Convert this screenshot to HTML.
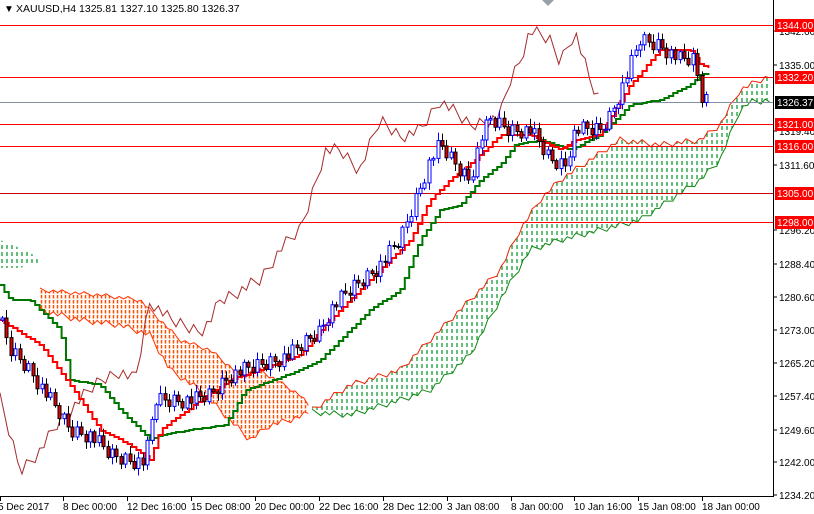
<!DOCTYPE html>
<html><head><meta charset="utf-8"><style>
html,body{margin:0;padding:0;background:#fff;}
svg{display:block;font-family:"Liberation Sans",sans-serif;}
</style></head><body>
<svg id="c" width="814" height="514" viewBox="0 0 814 514" xmlns="http://www.w3.org/2000/svg">
<defs>
<pattern id="pg" width="5" height="7" patternUnits="userSpaceOnUse"><line x1="2" y1="0" x2="2" y2="4" stroke="#129a36" stroke-width="1.3"/></pattern>
<pattern id="po" width="4" height="5" patternUnits="userSpaceOnUse"><line x1="1.5" y1="0" x2="1.5" y2="3.5" stroke="#ff5000" stroke-width="1.5"/></pattern>
</defs>
<rect width="814" height="514" fill="#fff"/>
<g id="cloud"></g>
<g id="hl"></g>
<g id="lines"></g>
<g id="candles"></g>
<line x1="773.5" y1="0" x2="773.5" y2="496" stroke="#000"/>
<line x1="0" y1="496.5" x2="774" y2="496.5" stroke="#000"/>
<g id="axis" font-size="10" fill="#000"></g>
<text x="4" y="12" font-size="10">▼</text>
<text x="16" y="12" font-size="10.5">XAUUSD,H4  1325.81 1327.10 1325.80 1326.37</text>
<polygon points="542,0 554,0 548,6" fill="#9aa0a8"/>
</svg>
<script>
var S='http://www.w3.org/2000/svg';
function el(p,t,a,txt){var e=document.createElementNS(S,t);for(var k in a)e.setAttribute(k,a[k]);if(txt!=null)e.textContent=txt;document.getElementById(p).appendChild(e);return e;}
function interp(pts,x){for(var i=0;i<pts.length-1;i++){if(x>=pts[i][0]&&x<=pts[i+1][0]){var t=(x-pts[i][0])/(pts[i+1][0]-pts[i][0]);return pts[i][1]+t*(pts[i+1][1]-pts[i][1]);}}return pts[pts.length-1][1];}
function pl(pts){return pts.map(function(p){return p[0]+','+p[1]}).join(' ');}
function step(pts,x0,x1){var o=[],prev=null;for(var x=x0;x<=x1;x+=4.4){var y=Math.round(interp(pts,x));if(prev!==null)o.push([x.toFixed(1),prev]);o.push([x.toFixed(1),y]);prev=y;}return o;}
function jag(pts,x0,x1,a){var o=[];for(var x=x0,i=0;x<=x1;x+=4.4,i++){o.push([x.toFixed(1),(interp(pts,x)+(((i*7)%5)-2)*a).toFixed(1)]);}return o;}
var oT=jag([[40,290],[100,295],[140,300],[160,320],[180,340],[210,350],[240,375],[260,370],[300,395],[312,410]],40,312,1);
var oB=jag([[40,310],[80,320],[120,325],[150,335],[170,370],[200,390],[230,420],[250,440],[270,425],[290,420],[312,412]],40,312,1.5);
el('cloud','polygon',{points:pl(oT.concat(oB.slice().reverse())),fill:'url(#po)'});
el('cloud','polyline',{points:pl(oT),fill:'none',stroke:'#ff3300','stroke-width':1});
el('cloud','polyline',{points:pl(oB),fill:'none',stroke:'#ff3300','stroke-width':1});
var gL=[[0,240],[20,248],[40,258]],gL2=[[0,268],[20,268],[40,262]];
el('cloud','polygon',{points:pl(gL.concat(gL2.slice().reverse())),fill:'url(#pg)'});
var gT=jag([[312,410],[350,385],[400,370],[430,340],[470,300],[500,270],[520,230],[540,200],[560,180],[590,160],[620,140],[660,145],[700,140],[720,125],[740,90],[760,80],[773,75]],312,773,1.5);
var gB=jag([[312,412],[350,415],[400,400],[430,390],[470,355],[500,300],[530,250],[560,240],[600,230],[640,220],[670,200],[700,180],[720,160],[740,110],[750,102],[773,100]],312,773,1.5);
el('cloud','polygon',{points:pl(gT.concat(gB.slice().reverse())),fill:'url(#pg)'});
el('cloud','polyline',{points:pl(gT),fill:'none',stroke:'#ee2200','stroke-width':1});
el('cloud','polyline',{points:pl(gB),fill:'none',stroke:'#118811','stroke-width':1});
[[25,'#f00'],[77,'#f00'],[124,'#f00'],[146,'#f00'],[193,'#c00'],[222,'#f00'],[102,'#8090a0']].forEach(function(h){el('hl','line',{x1:0,x2:774,y1:h[0]+.5,y2:h[0]+.5,stroke:h[1],'stroke-width':1});});
var ch=[[0,400],[20,470],[40,450],[60,420],[80,400],[100,380],[120,370],[135,380],[150,300],[170,320],[200,330],[210,320],[220,300],[240,290],[260,280],[280,250],[300,230],[310,200],[325,150],[340,150],[350,160],[360,170],[380,120],[400,135],[420,130],[440,100],[470,125],[500,115],[510,80],[520,60],[530,30],[550,40],[560,60],[575,30],[590,80],[600,100]];
var chd=[];for(var x=0;x<=600;x+=4.4){chd.push([x.toFixed(1),(interp(ch,x)+((x*7)%13-6)*1.2).toFixed(1)]);}
el('lines','polyline',{points:pl(chd),fill:'none',stroke:'#a52a2a','stroke-width':1});
var kj=[[0,285],[10,300],[30,300],[60,330],[70,380],[100,385],[120,410],[150,440],[160,435],[190,430],[225,425],[245,390],[260,385],[300,370],[320,360],[350,330],[370,310],[400,290],[420,240],[440,210],[460,205],[480,180],[500,165],[515,145],[540,140],[570,150],[600,135],[630,105],[660,100],[690,85],[700,75],[710,73]];
el('lines','polyline',{points:pl(step(kj,0,710)),fill:'none',stroke:'#007700','stroke-width':2});
var tk=[[0,320],[40,345],[70,385],[100,430],[130,445],[150,460],[160,430],[180,415],[230,380],[260,370],[300,355],[330,320],[350,300],[380,270],[410,240],[430,200],[450,180],[475,160],[500,135],[530,135],[560,150],[575,140],[600,135],[615,110],[630,85],[660,50],[690,50],[700,65],[710,68]];
el('lines','polyline',{points:pl(step(tk,0,710)),fill:'none',stroke:'#ff0000','stroke-width':2});
var cp=[[0,320],[10,350],[30,370],[50,400],[70,430],[90,435],[110,455],[130,460],[145,462],[155,400],[170,400],[195,400],[210,395],[230,375],[260,365],[290,355],[320,330],[330,310],[350,290],[380,265],[400,240],[415,200],[430,160],[440,145],[460,170],[470,180],[480,140],[490,120],[510,130],[530,130],[550,160],[565,165],[575,130],[600,130],[610,115],[625,80],[640,40],[660,45],[680,60],[695,60],[700,95],[707,100]];
var prev=interp(cp,0),i=0;
for(var x=2;x<=708;x+=4.4,i++){var c=interp(cp,x)+(((i*37)%11)-5)*1.6;var o=prev;prev=c;var hi=Math.min(o,c)-2-((i*13)%7),lo=Math.max(o,c)+2+((i*17)%6);
var bull=c<o;var cx=Math.round(x)+.5;
el('candles','line',{x1:cx,x2:cx,y1:hi,y2:lo,stroke:bull?'#0000ff':'#000'});
var t=Math.min(o,c),h=Math.max(Math.abs(o-c),1);
el('candles','rect',{x:cx-1.5,y:t,width:3,height:h,fill:bull?'#fff':'#e00000',stroke:bull?'#0000ff':'#000','stroke-width':1});}
var pr=[[31,'1342.60'],[65,'1335.00'],[131,'1319.40'],[165,'1311.60'],[230,'1296.20'],[264,'1288.40'],[297,'1280.60'],[330,'1273.00'],[363,'1265.20'],[396,'1257.40'],[430,'1249.60'],[462,'1242.00'],[495,'1234.20']];
pr.forEach(function(p){el('axis','line',{x1:773,x2:777,y1:p[0],y2:p[0],stroke:'#000'});el('axis','text',{x:779,y:p[0]+4},p[1]);});
[[25,'1344.00','#f00'],[77,'1332.20','#f00'],[102,'1326.37','#000'],[124,'1321.00','#f00'],[146,'1316.00','#f00'],[193,'1305.00','#f00'],[222,'1298.00','#f00']].forEach(function(l){el('axis','rect',{x:775,y:l[0]-6,width:39,height:13,fill:l[2]});el('axis','text',{x:777,y:l[0]+4,fill:'#fff'},l[1]);});
var xl=[[0,'5 Dec 2017'],[63,'8 Dec 00:00'],[127,'12 Dec 16:00'],[191,'15 Dec 08:00'],[255,'20 Dec 00:00'],[319,'22 Dec 16:00'],[383,'28 Dec 12:00'],[447,'3 Jan 08:00'],[511,'8 Jan 00:00'],[574,'10 Jan 16:00'],[638,'15 Jan 08:00'],[702,'18 Jan 00:00']];
xl.forEach(function(l){el('axis','line',{x1:l[0]+.5,x2:l[0]+.5,y1:496,y2:501,stroke:'#000'});el('axis','text',{x:l[0]+(l[0]?0:-2),y:510},l[1]);});
</script>
</body></html>
